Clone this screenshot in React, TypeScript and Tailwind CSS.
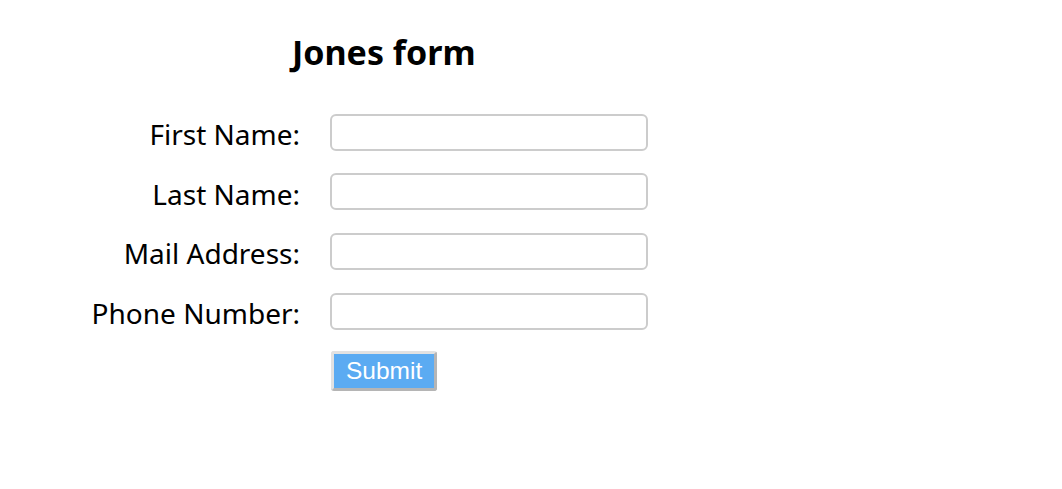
import React from "react";

const fields = ["First Name:", "Last Name:", "Mail Address:", "Phone Number:"];

const App = () => {
  return (
    <div className="min-h-screen bg-white text-black font-['Noto_Sans',sans-serif]">
      <div className="w-[648px] pt-[28px]">
        <h1 className="pl-[292px] text-[34px] font-bold leading-[48px]">Jones form</h1>
        <form className="mt-[38px] flex flex-col gap-[23.7px]" onSubmit={(e) => e.preventDefault()}>
          {fields.map((label) => (
            <div key={label} className="flex items-center h-[36px]">
              <label className="w-[300px] text-right text-[28px] leading-[36px] pt-[4px]">{label}</label>
              <input
                type="text"
                className="ml-[30px] w-[318px] h-[37px] rounded-[6px] border-2 border-[#cccccc] px-2 text-[18px] outline-none"
              />
            </div>
          ))}
          <div className="flex pl-[331px] -mt-[2px]">
            <button
              type="submit"
              className="h-[40px] px-[12px] bg-[#5babf2] text-white text-[24.5px] font-['Liberation_Sans',sans-serif] leading-none border-[3px] border-t-[#e2e2e2] border-l-[#e2e2e2] border-r-[#b5b5b5] border-b-[#b5b5b5] rounded-[3px]"
            >
              Submit
            </button>
          </div>
        </form>
      </div>
    </div>
  );
};

export default App;
